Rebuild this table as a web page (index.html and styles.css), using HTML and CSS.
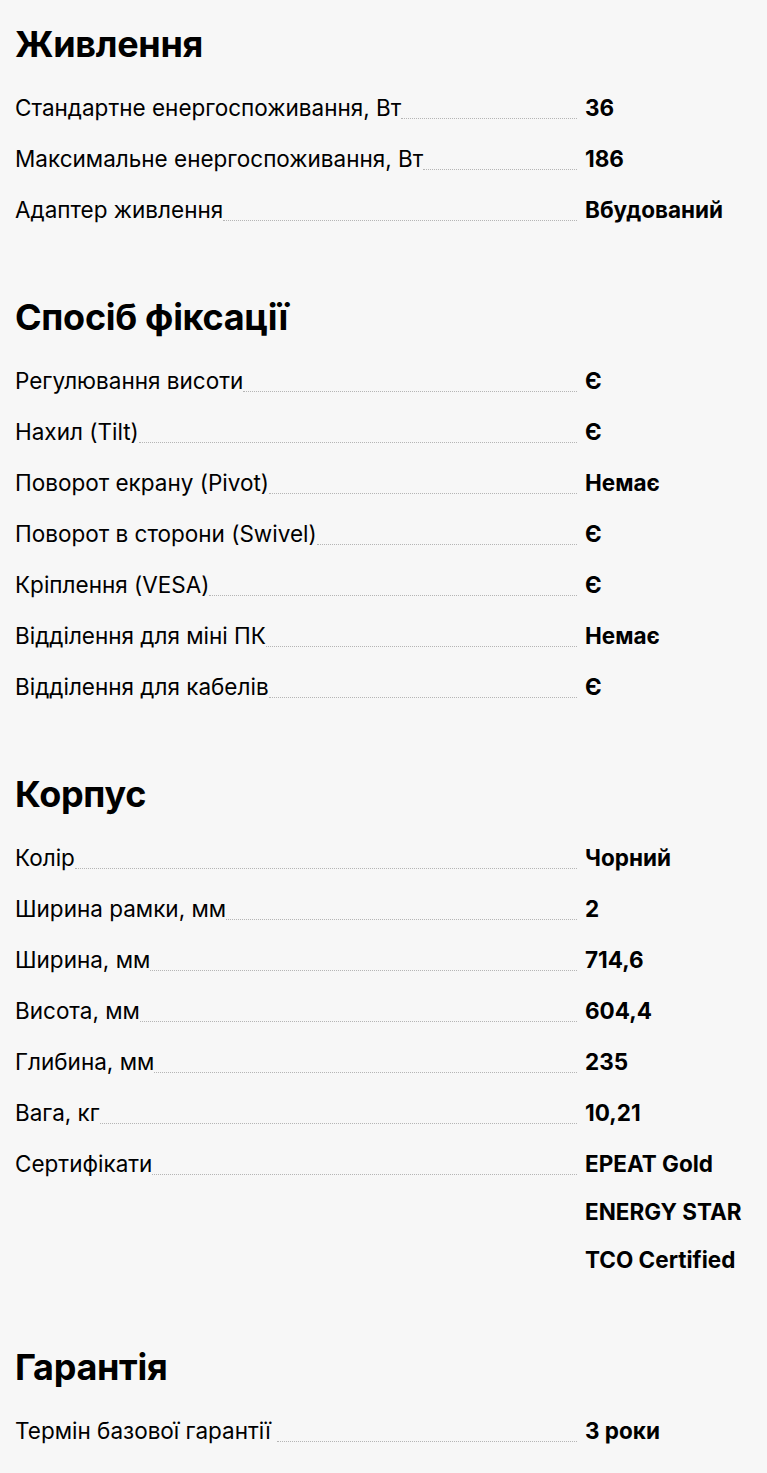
FILE: index.html
```html
<!DOCTYPE html>
<html lang="uk">
<head>
    <meta charset="UTF-8">
    <meta name="viewport" content="width=device-width, initial-scale=1.0">
    <title>Характеристики</title>
    <link rel="stylesheet" href="styles.css">
</head>
<body>

<div class="specs">
    <section class="spec-group">
        <h2>Живлення</h2>
        <div class="spec-row">
            <div class="spec-label"><span>Стандартне енергоспоживання, Вт</span><i class="dots"></i></div>
            <div class="spec-value"><div>36</div></div>
        </div>
        <div class="spec-row">
            <div class="spec-label"><span>Максимальне енергоспоживання, Вт</span><i class="dots"></i></div>
            <div class="spec-value"><div>186</div></div>
        </div>
        <div class="spec-row">
            <div class="spec-label"><span>Адаптер живлення</span><i class="dots"></i></div>
            <div class="spec-value"><div>Вбудований</div></div>
        </div>
    </section>

    <section class="spec-group">
        <h2>Спосіб фіксації</h2>
        <div class="spec-row">
            <div class="spec-label"><span>Регулювання висоти</span><i class="dots"></i></div>
            <div class="spec-value"><div>Є</div></div>
        </div>
        <div class="spec-row">
            <div class="spec-label"><span>Нахил (Tilt)</span><i class="dots"></i></div>
            <div class="spec-value"><div>Є</div></div>
        </div>
        <div class="spec-row">
            <div class="spec-label"><span>Поворот екрану (Pivot)</span><i class="dots"></i></div>
            <div class="spec-value"><div>Немає</div></div>
        </div>
        <div class="spec-row">
            <div class="spec-label"><span>Поворот в сторони (Swivel)</span><i class="dots"></i></div>
            <div class="spec-value"><div>Є</div></div>
        </div>
        <div class="spec-row">
            <div class="spec-label"><span>Кріплення (VESA)</span><i class="dots"></i></div>
            <div class="spec-value"><div>Є</div></div>
        </div>
        <div class="spec-row">
            <div class="spec-label"><span>Відділення для міні ПК</span><i class="dots"></i></div>
            <div class="spec-value"><div>Немає</div></div>
        </div>
        <div class="spec-row">
            <div class="spec-label"><span>Відділення для кабелів</span><i class="dots"></i></div>
            <div class="spec-value"><div>Є</div></div>
        </div>
    </section>

    <section class="spec-group">
        <h2>Корпус</h2>
        <div class="spec-row">
            <div class="spec-label"><span>Колір</span><i class="dots"></i></div>
            <div class="spec-value"><div>Чорний</div></div>
        </div>
        <div class="spec-row">
            <div class="spec-label"><span>Ширина рамки, мм</span><i class="dots"></i></div>
            <div class="spec-value"><div>2</div></div>
        </div>
        <div class="spec-row">
            <div class="spec-label"><span>Ширина, мм</span><i class="dots"></i></div>
            <div class="spec-value"><div>714,6</div></div>
        </div>
        <div class="spec-row">
            <div class="spec-label"><span>Висота, мм</span><i class="dots"></i></div>
            <div class="spec-value"><div>604,4</div></div>
        </div>
        <div class="spec-row">
            <div class="spec-label"><span>Глибина, мм</span><i class="dots"></i></div>
            <div class="spec-value"><div>235</div></div>
        </div>
        <div class="spec-row">
            <div class="spec-label"><span>Вага, кг</span><i class="dots"></i></div>
            <div class="spec-value"><div>10,21</div></div>
        </div>
        <div class="spec-row">
            <div class="spec-label"><span>Сертифікати</span><i class="dots"></i></div>
            <div class="spec-value">
                <div>EPEAT Gold</div>
                <div>ENERGY STAR</div>
                <div>TCO Certified</div>
            </div>
        </div>
    </section>

    <section class="spec-group">
        <h2>Гарантія</h2>
        <div class="spec-row">
            <div class="spec-label"><span>Термін базової гарантії&nbsp;</span><i class="dots"></i></div>
            <div class="spec-value"><div>3 роки</div></div>
        </div>
    </section>
</div>

</body>
</html>
```

FILE: styles.css
```css
body {
    font-family: Inter, "Noto Sans", sans-serif;
    background-color: #f7f7f7;
    color: #000;
    margin: 0;
    padding: 0;
}

.specs {
    padding: 24px 15px 20px 15px;
}

.spec-group {
    margin-bottom: 72px;
}

.spec-group h2 {
    font-size: 36px;
    font-weight: 700;
    line-height: 40px;
    margin: 0 0 29px 0;
    letter-spacing: -0.3px;
}

.spec-row {
    display: grid;
    grid-template-columns: 562px 1fr;
    column-gap: 8px;
    margin-bottom: 21px;
    font-size: 22.5px;
    line-height: 30px;
}

.spec-label {
    display: flex;
    align-items: baseline;
}

.spec-label span {
    white-space: nowrap;
}

.dots {
    flex: 1;
    border-bottom: 1px dotted #b5b5b5;
    position: relative;
    top: 3px;
}

.spec-value {
    font-weight: 700;
    display: flex;
    flex-direction: column;
    gap: 18px;
}
```
